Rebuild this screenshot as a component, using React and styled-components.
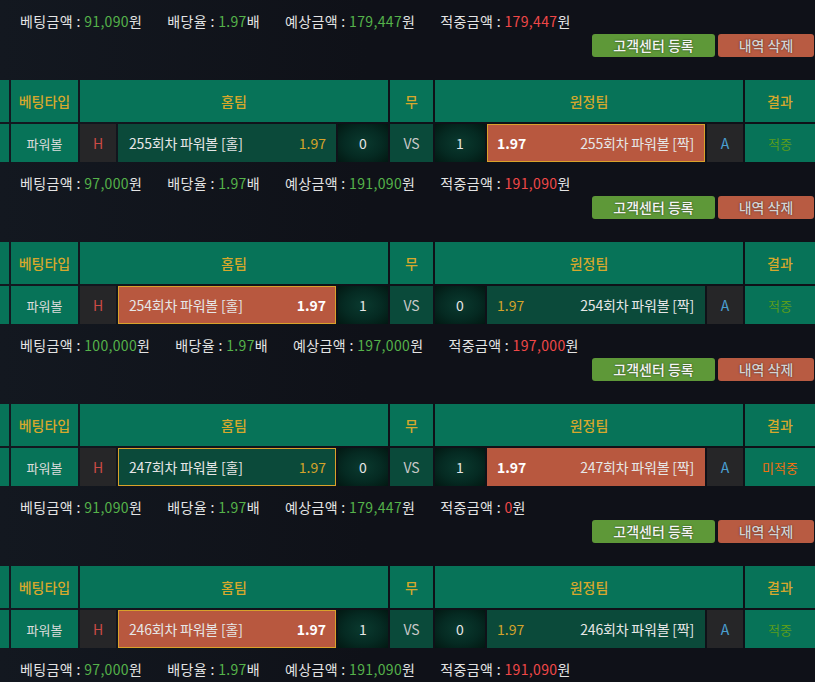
import React from "react";
import styled, { createGlobalStyle, css } from "styled-components";

const Global = createGlobalStyle`
  html, body { margin: 0; padding: 0; }
  body {
    background: linear-gradient(90deg, #131820 0%, #0f1118 45%, #0f1118 100%);
    font-family: "Noto Sans CJK KR", "Noto Sans", sans-serif;
    overflow: hidden;
    width: 815px;
    height: 682px;
  }
`;

const Page = styled.div`
  width: 815px;
  display: flex;
  flex-direction: column;
`;

const Info = styled.div`
  display: flex;
  flex-direction: column;
  height: 80px;
`;

const Summary = styled.div`
  display: flex;
  gap: 25px;
  padding: 11px 0 0 20px;
  height: 20px;
  line-height: 20px;
  font-size: 14px;
  letter-spacing: 0.35px;
  color: #e4e4e4;
  white-space: nowrap;
`;

const Val = styled.span`
  color: ${(p) => (p.$red ? "#f04848" : "#55b24a")};
`;

const Buttons = styled.div`
  display: flex;
  justify-content: flex-end;
  gap: 3px;
  margin-top: 3px;
  padding-right: 1px;
`;

const Btn = styled.button`
  height: 23px;
  width: ${(p) => p.$w}px;
  border: none;
  border-radius: 3px;
  padding: 0;
  font-family: inherit;
  font-size: 14px;
  font-weight: 500;
  line-height: 23px;
  cursor: pointer;
  background: ${(p) => (p.$red ? "#b85b42" : "#5e9838")};
  color: ${(p) => (p.$red ? "#d4d4d4" : "#f4f4f4")};
  text-shadow: 0 0 2px rgba(0, 0, 0, 0.6);
`;

const COLS = "9px 67px 36px 218px 50px 43px 50px 218px 36px 70px";

const Row = styled.div`
  display: grid;
  grid-template-columns: ${COLS};
  column-gap: 2px;
  height: ${(p) => p.$h}px;
`;

const Table = styled.div`
  display: flex;
  flex-direction: column;
  gap: 2px;
`;

const Cell = styled.div`
  display: flex;
  align-items: center;
  justify-content: center;
  font-size: 13px;
  color: #e6e6e6;
  box-sizing: border-box;
  overflow: hidden;
  white-space: nowrap;
`;

const Head = styled(Cell)`
  background: #077358;
  color: #d6a82c;
  font-size: 14px;
  font-weight: 500;
  grid-column: ${(p) => p.$span || "auto"};
`;

const Teal = styled(Cell)`
  background: #077358;
  color: ${(p) => p.$color || "#dcdcdc"};
`;

const Side = styled(Cell)`
  background: #262628;
  color: ${(p) => (p.$away ? "#4a9ed0" : "#cc4a46")};
  font-size: 14px;
`;

const Score = styled(Cell)`
  background: radial-gradient(ellipse at center, #0a3a2f 0%, #052a22 55%, #021812 100%);
  font-size: 14px;
`;

const Vs = styled(Cell)`
  background: #0a4a3a;
  color: #c8c8c8;
  font-size: 14px;
`;

const Team = styled(Cell)`
  justify-content: space-between;
  padding: 0 10px 0 11px;
  flex-direction: ${(p) => (p.$away ? "row-reverse" : "row")};
  background: ${(p) => (p.$win ? "#b8583f" : "#0b4a3a")};
  ${(p) =>
    p.$pick &&
    css`
      border: 1px solid #d9a22a;
      padding: 0 9px 0 10px;
    `}
  ${(p) =>
    p.$away &&
    css`
      padding: 0 ${p.$pick ? 10 : 11}px 0 ${p.$pick ? 9 : 10}px;
    `}
  font-size: 14px;
  letter-spacing: -0.2px;
`;

const Odds = styled.span`
  color: ${(p) => (p.$win ? "#ffffff" : "#d4a32a")};
  font-weight: ${(p) => (p.$win ? 700 : 400)};
  letter-spacing: 0;
`;

function Summ({ bet, rate, expect, win }) {
  return (
    <Info>
      <Summary>
        <span>
          베팅금액 : <Val>{bet}</Val>원
        </span>
        <span>
          배당율 : <Val>{rate}</Val>배
        </span>
        <span>
          예상금액 : <Val>{expect}</Val>원
        </span>
        <span>
          적중금액 : <Val $red>{win}</Val>원
        </span>
      </Summary>
      <Buttons>
        <Btn $w={123}>고객센터 등록</Btn>
        <Btn $w={96} $red>
          내역 삭제
        </Btn>
      </Buttons>
    </Info>
  );
}

function Game({ round, home, away, homeWin, awayWin, homePick, awayPick, result, miss }) {
  return (
    <Table>
      <Row $h={42}>
        <Head />
        <Head>베팅타입</Head>
        <Head $span="span 3">홈팀</Head>
        <Head>무</Head>
        <Head $span="span 3">원정팀</Head>
        <Head>결과</Head>
      </Row>
      <Row $h={38}>
        <Teal />
        <Teal>파워볼</Teal>
        <Side>H</Side>
        <Team $win={homeWin} $pick={homePick}>
          <span>{round}회차 파워볼 [홀]</span>
          <Odds $win={homeWin}>1.97</Odds>
        </Team>
        <Score>{home}</Score>
        <Vs>VS</Vs>
        <Score>{away}</Score>
        <Team $away $win={awayWin} $pick={awayPick}>
          <span>{round}회차 파워볼 [짝]</span>
          <Odds $win={awayWin}>1.97</Odds>
        </Team>
        <Side $away>A</Side>
        <Teal $color={miss ? "#f07010" : "#5a9c1c"}>{result}</Teal>
      </Row>
    </Table>
  );
}

export default function App() {
  return (
    <>
      <Global />
      <Page>
        <Summ bet="91,090" rate="1.97" expect="179,447" win="179,447" />
        <Game round={255} home={0} away={1} awayWin awayPick result="적중" />
        <Summ bet="97,000" rate="1.97" expect="191,090" win="191,090" />
        <Game round={254} home={1} away={0} homeWin homePick result="적중" />
        <Summ bet="100,000" rate="1.97" expect="197,000" win="197,000" />
        <Game round={247} home={0} away={1} awayWin homePick result="미적중" miss />
        <Summ bet="91,090" rate="1.97" expect="179,447" win="0" />
        <Game round={246} home={1} away={0} homeWin homePick result="적중" />
        <Summ bet="97,000" rate="1.97" expect="191,090" win="191,090" />
      </Page>
    </>
  );
}
